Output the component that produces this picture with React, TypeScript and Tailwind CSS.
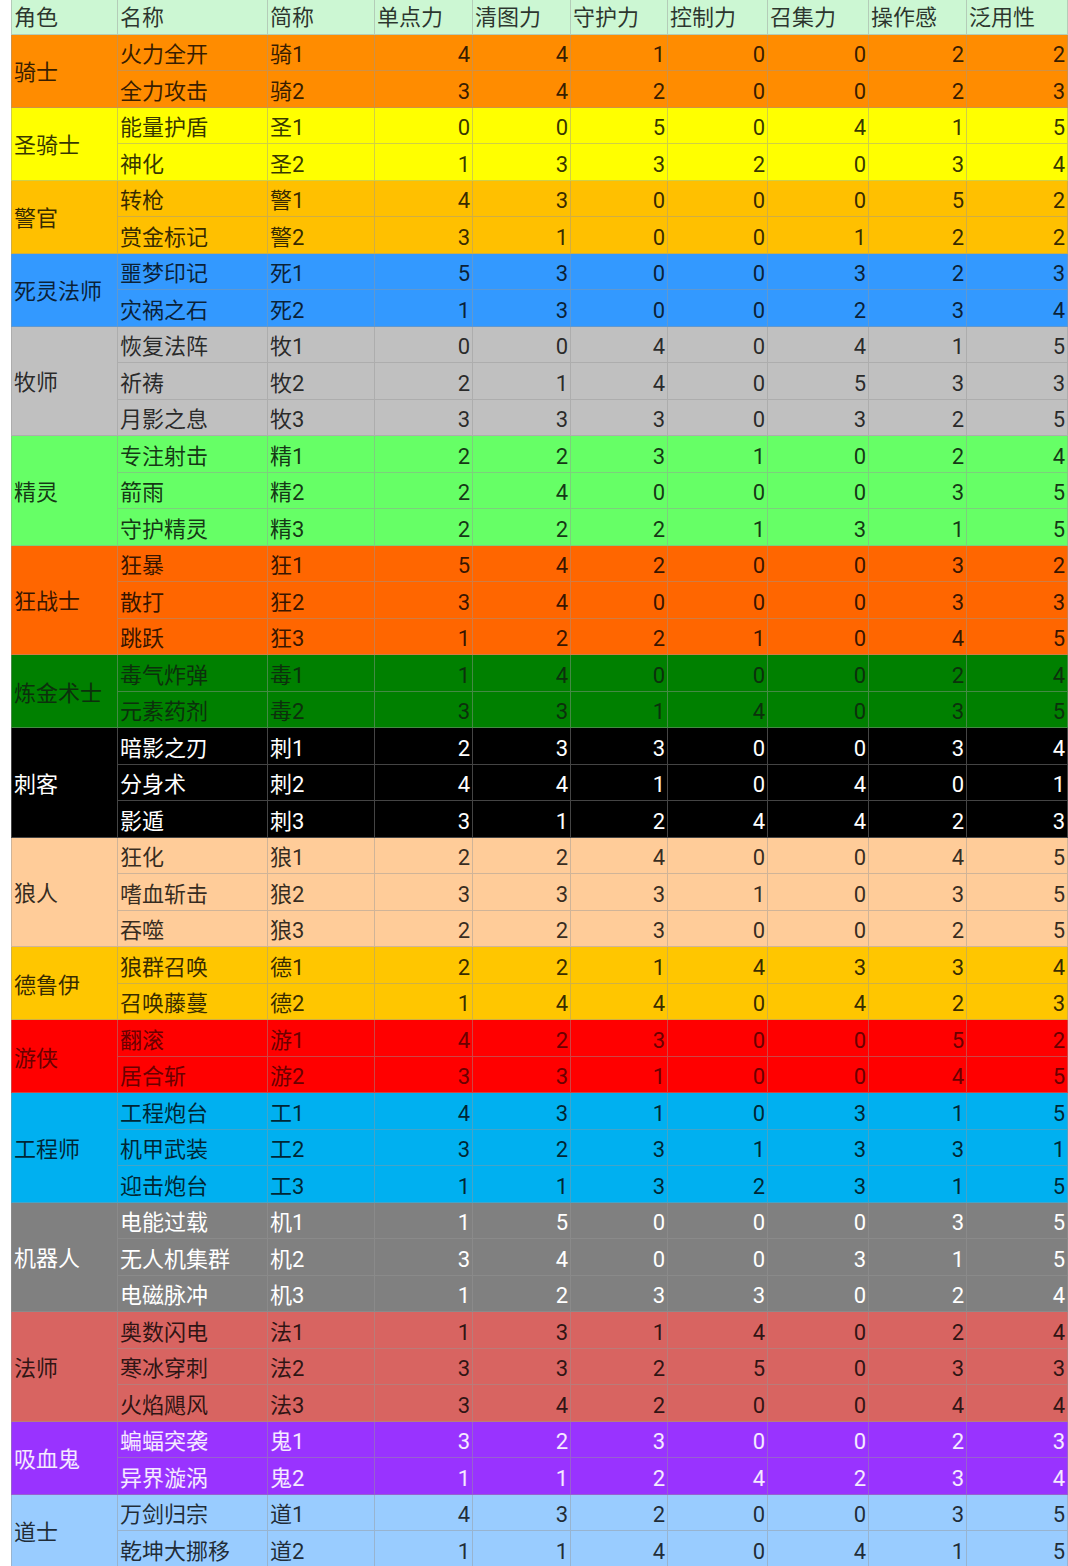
type Row = [string, string, number[]]

type Group = {
  role: string
  bg: string
  fg: string
  rows: Row[]
}

const groups: Group[] = [
  {
    role: '骑士',
    bg: 'bg-[#ff8c00]',
    fg: 'text-black/80',
    rows: [
      ['火力全开', '骑1', [4, 4, 1, 0, 0, 2, 2]],
      ['全力攻击', '骑2', [3, 4, 2, 0, 0, 2, 3]],
    ],
  },
  {
    role: '圣骑士',
    bg: 'bg-[#ffff00]',
    fg: 'text-black/80',
    rows: [
      ['能量护盾', '圣1', [0, 0, 5, 0, 4, 1, 5]],
      ['神化', '圣2', [1, 3, 3, 2, 0, 3, 4]],
    ],
  },
  {
    role: '警官',
    bg: 'bg-[#ffc000]',
    fg: 'text-black/80',
    rows: [
      ['转枪', '警1', [4, 3, 0, 0, 0, 5, 2]],
      ['赏金标记', '警2', [3, 1, 0, 0, 1, 2, 2]],
    ],
  },
  {
    role: '死灵法师',
    bg: 'bg-[#3399ff]',
    fg: 'text-black/80',
    rows: [
      ['噩梦印记', '死1', [5, 3, 0, 0, 3, 2, 3]],
      ['灾祸之石', '死2', [1, 3, 0, 0, 2, 3, 4]],
    ],
  },
  {
    role: '牧师',
    bg: 'bg-[#c0c0c0]',
    fg: 'text-black/80',
    rows: [
      ['恢复法阵', '牧1', [0, 0, 4, 0, 4, 1, 5]],
      ['祈祷', '牧2', [2, 1, 4, 0, 5, 3, 3]],
      ['月影之息', '牧3', [3, 3, 3, 0, 3, 2, 5]],
    ],
  },
  {
    role: '精灵',
    bg: 'bg-[#66ff66]',
    fg: 'text-black/80',
    rows: [
      ['专注射击', '精1', [2, 2, 3, 1, 0, 2, 4]],
      ['箭雨', '精2', [2, 4, 0, 0, 0, 3, 5]],
      ['守护精灵', '精3', [2, 2, 2, 1, 3, 1, 5]],
    ],
  },
  {
    role: '狂战士',
    bg: 'bg-[#ff6600]',
    fg: 'text-black/80',
    rows: [
      ['狂暴', '狂1', [5, 4, 2, 0, 0, 3, 2]],
      ['散打', '狂2', [3, 4, 0, 0, 0, 3, 3]],
      ['跳跃', '狂3', [1, 2, 2, 1, 0, 4, 5]],
    ],
  },
  {
    role: '炼金术士',
    bg: 'bg-[#008000]',
    fg: 'text-[#0c300c]',
    rows: [
      ['毒气炸弹', '毒1', [1, 4, 0, 0, 0, 2, 4]],
      ['元素药剂', '毒2', [3, 3, 1, 4, 0, 3, 5]],
    ],
  },
  {
    role: '刺客',
    bg: 'bg-black',
    fg: 'text-white',
    rows: [
      ['暗影之刃', '刺1', [2, 3, 3, 0, 0, 3, 4]],
      ['分身术', '刺2', [4, 4, 1, 0, 4, 0, 1]],
      ['影遁', '刺3', [3, 1, 2, 4, 4, 2, 3]],
    ],
  },
  {
    role: '狼人',
    bg: 'bg-[#ffcc99]',
    fg: 'text-black/80',
    rows: [
      ['狂化', '狼1', [2, 2, 4, 0, 0, 4, 5]],
      ['嗜血斩击', '狼2', [3, 3, 3, 1, 0, 3, 5]],
      ['吞噬', '狼3', [2, 2, 3, 0, 0, 2, 5]],
    ],
  },
  {
    role: '德鲁伊',
    bg: 'bg-[#ffc600]',
    fg: 'text-black/80',
    rows: [
      ['狼群召唤', '德1', [2, 2, 1, 4, 3, 3, 4]],
      ['召唤藤蔓', '德2', [1, 4, 4, 0, 4, 2, 3]],
    ],
  },
  {
    role: '游侠',
    bg: 'bg-[#ff0000]',
    fg: 'text-[#6a0000]',
    rows: [
      ['翻滚', '游1', [4, 2, 3, 0, 0, 5, 2]],
      ['居合斩', '游2', [3, 3, 1, 0, 0, 4, 5]],
    ],
  },
  {
    role: '工程师',
    bg: 'bg-[#00b0f0]',
    fg: 'text-black/80',
    rows: [
      ['工程炮台', '工1', [4, 3, 1, 0, 3, 1, 5]],
      ['机甲武装', '工2', [3, 2, 3, 1, 3, 3, 1]],
      ['迎击炮台', '工3', [1, 1, 3, 2, 3, 1, 5]],
    ],
  },
  {
    role: '机器人',
    bg: 'bg-[#808080]',
    fg: 'text-white',
    rows: [
      ['电能过载', '机1', [1, 5, 0, 0, 0, 3, 5]],
      ['无人机集群', '机2', [3, 4, 0, 0, 3, 1, 5]],
      ['电磁脉冲', '机3', [1, 2, 3, 3, 0, 2, 4]],
    ],
  },
  {
    role: '法师',
    bg: 'bg-[#d86461]',
    fg: 'text-black/80',
    rows: [
      ['奥数闪电', '法1', [1, 3, 1, 4, 0, 2, 4]],
      ['寒冰穿刺', '法2', [3, 3, 2, 5, 0, 3, 3]],
      ['火焰飓风', '法3', [3, 4, 2, 0, 0, 4, 4]],
    ],
  },
  {
    role: '吸血鬼',
    bg: 'bg-[#9933ff]',
    fg: 'text-white/90',
    rows: [
      ['蝙蝠突袭', '鬼1', [3, 2, 3, 0, 0, 2, 3]],
      ['异界漩涡', '鬼2', [1, 1, 2, 4, 2, 3, 4]],
    ],
  },
  {
    role: '道士',
    bg: 'bg-[#99ccff]',
    fg: 'text-black/80',
    rows: [
      ['万剑归宗', '道1', [4, 3, 2, 0, 0, 3, 5]],
      ['乾坤大挪移', '道2', [1, 1, 4, 0, 4, 1, 5]],
    ],
  },
]

const headers = ['角色', '名称', '简称', '单点力', '清图力', '守护力', '控制力', '召集力', '操作感', '泛用性']

// column widths measured off the sheet; role column sits outside the row grid
const rowCols = 'grid grid-cols-[150px_107px_98px_98px_97px_100px_101px_98px_101px]'
const line = 'border-[rgba(150,150,150,0.45)]'

export default function App() {
  return (
    <div
      className="min-h-screen bg-white pl-[11px] text-[22px] leading-none overflow-hidden"
      style={{ fontFamily: 'Roboto, "Noto Sans CJK SC", sans-serif' }}
    >
      {/* header */}
      <div className="flex h-[34.5px] bg-[#ccf7d3] text-black/80">
        <div className={`w-[107px] flex items-center pl-[2px] pt-[3px] border-l border-r border-b ${line}`}>
          {headers[0]}
        </div>
        <div className={rowCols}>
          {headers.slice(1).map((h) => (
            <div key={h} className={`flex items-center pl-[2px] pt-[3px] border-r border-b ${line}`}>
              {h}
            </div>
          ))}
        </div>
      </div>

      {groups.map((g) => (
        <div key={g.role} className={`flex ${g.bg} ${g.fg}`}>
          <div className={`w-[107px] flex items-center pl-[2px] pt-[5px] border-l border-r border-b ${line}`}>
            {g.role}
          </div>
          <div className="flex flex-col">
            {g.rows.map(([name, short, vals]) => (
              <div key={short} className={`${rowCols} h-[36.5px]`}>
                <div className={`flex items-center pl-[2px] pt-[6px] border-r border-b ${line}`}>{name}</div>
                <div className={`flex items-center pl-[2px] pt-[6px] border-r border-b ${line}`}>{short}</div>
                {vals.map((v, i) => (
                  <div
                    key={i}
                    className={`flex items-center justify-end pr-[2px] pt-[6px] border-r border-b ${line}`}
                  >
                    {v}
                  </div>
                ))}
              </div>
            ))}
          </div>
        </div>
      ))}
    </div>
  )
}
